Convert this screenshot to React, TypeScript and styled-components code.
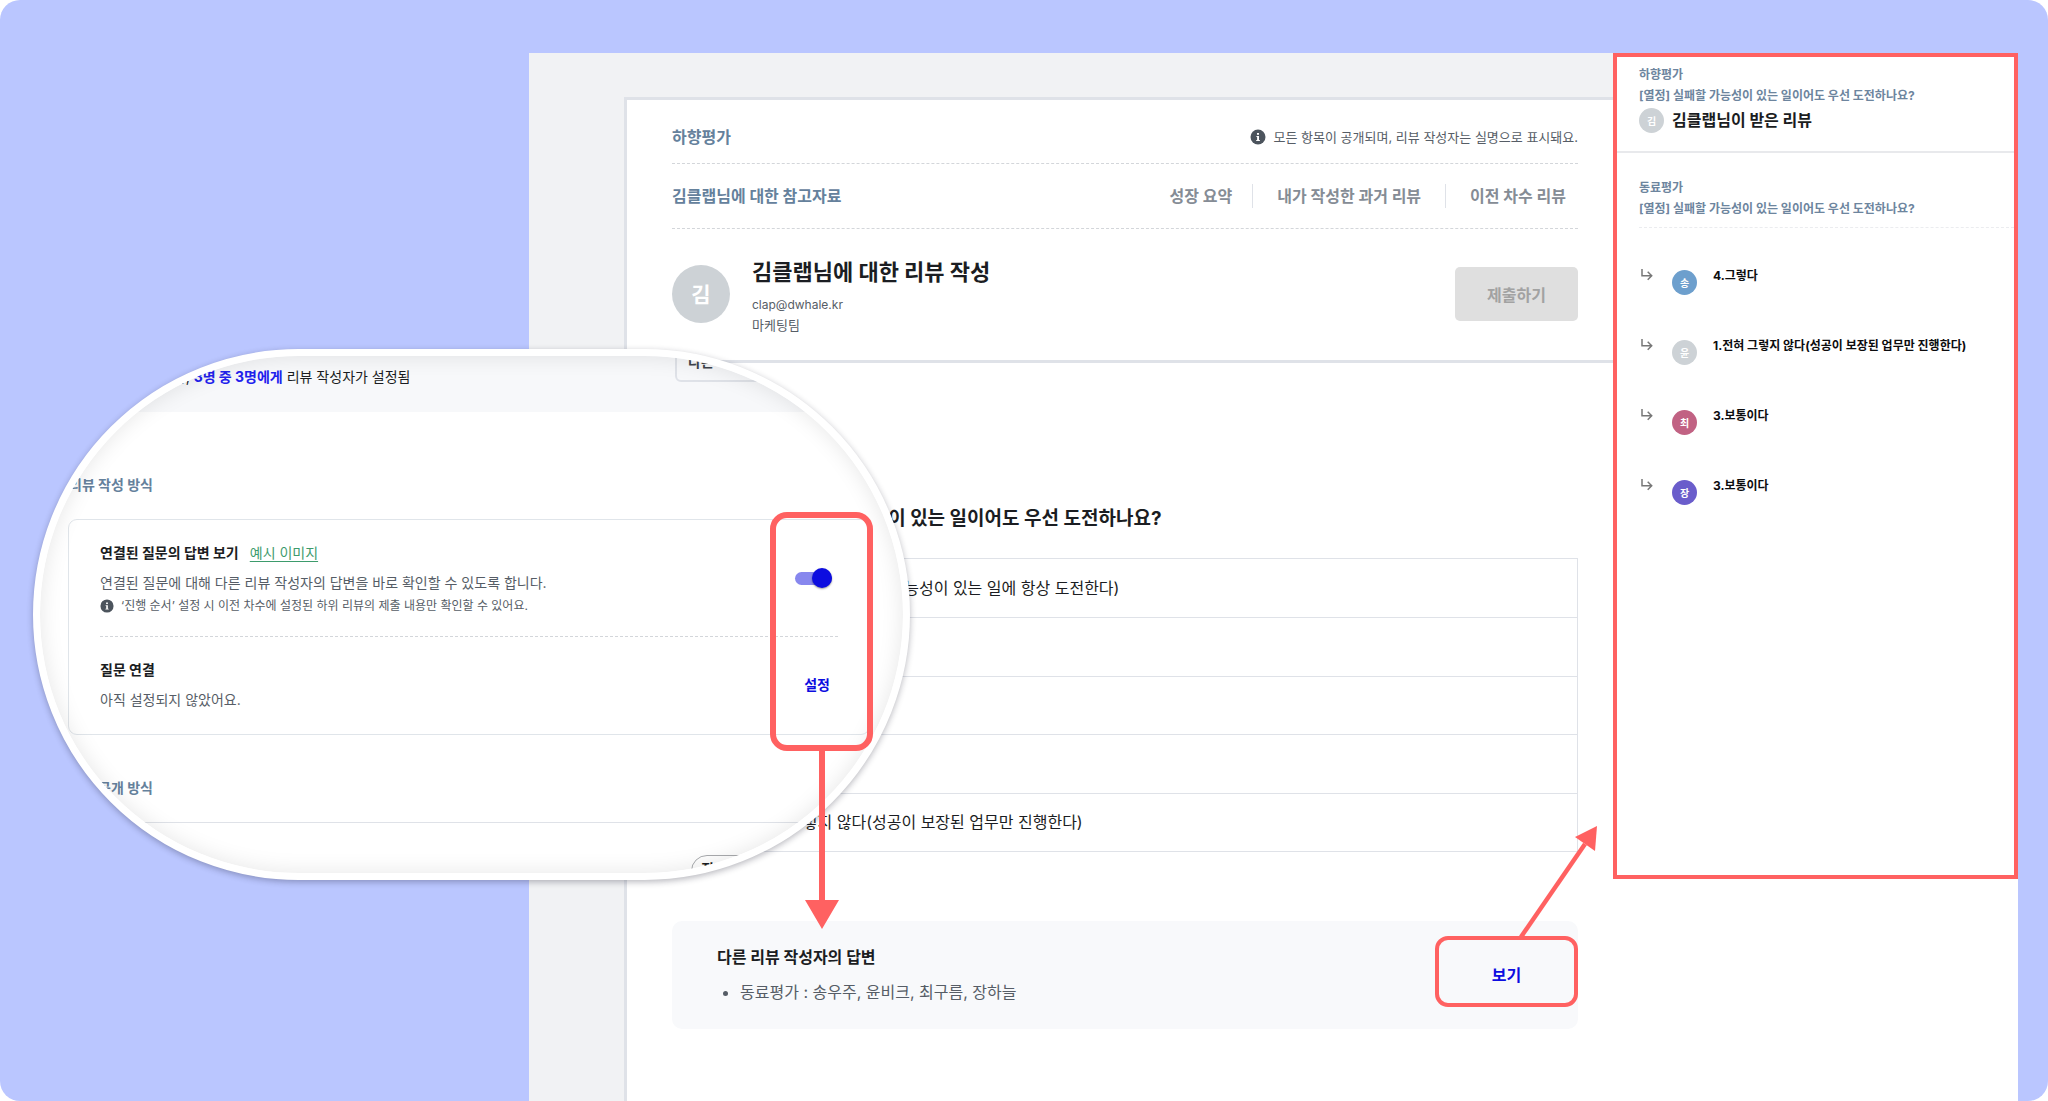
import React from "react";
import styled, { createGlobalStyle } from "styled-components";

const c = {
  red: "#ff6161",
  blue: "#0d0de0",
  slate: "#65819c",
  ink: "#1b1d22",
  gray: "#565d66",
  line: "#dfe2e8",
  soft: "#f7f8fa",
};

const GlobalStyle = createGlobalStyle`
  *, *::before, *::after { box-sizing: border-box; }
  body { margin: 0; background: #fff; }
  body, button, input { font-family: Inter, "Noto Sans CJK KR", sans-serif; }
  h1, h2, h3, p, ul, ol, fieldset { margin: 0; padding: 0; border: 0; }
  button { border: 0; padding: 0; background: none; cursor: pointer; }
`;

const Canvas = styled.div`
  position: relative;
  display: flex;
  min-height: 100vh;
  padding: 53px 30px 0 529px;
  border-radius: 20px;
  overflow: hidden;
  background: #bac6ff;
`;

const Desk = styled.main`
  flex: 1;
  display: flex;
  padding: 44px 0 0 95px;
  background: #f1f2f4;
`;

const Sheet = styled.div`
  flex: 1;
  border-left: 3px solid ${c.line};
  border-top: 3px solid ${c.line};
  background: #fff;
`;

const SheetHeader = styled.header`
  height: 263px;
  padding: 0 35px 0 45px;
  border-bottom: 3px solid ${c.line};
`;

const HeaderRow = styled.div<{ $h: number }>`
  display: flex;
  align-items: center;
  justify-content: space-between;
  height: ${(p) => p.$h}px;
  padding-top: ${(p) => (p.$h === 64 ? 10 : 0)}px;
  border-bottom: 1px dashed #d3d6da;
`;

const SectionTitle = styled.h2<{ $size?: number }>`
  font-size: ${(p) => p.$size || 16}px;
  line-height: 20px;
  font-weight: 700;
  color: ${c.slate};
`;

const Notice = styled.p<{ $size: number }>`
  display: flex;
  align-items: center;
  gap: 7px;
  font-size: ${(p) => p.$size}px;
  line-height: 20px;
  color: ${c.gray};
`;

const RefNav = styled.nav`
  display: flex;
  align-items: center;
  padding-right: 12px;
`;

const RefLink = styled.a`
  padding: 2px 24px;
  font-size: 16px;
  line-height: 20px;
  font-weight: 700;
  color: #858c95;
  text-decoration: none;
  & + & { border-left: 1px solid ${c.line}; }
  &:first-child { padding-right: 20px; }
  &:last-child { padding-right: 0; }
`;

const Person = styled.div`
  display: flex;
  align-items: center;
  gap: 22px;
  height: 130px;
`;

const PersonInfo = styled.div`
  flex: 1;
  display: flex;
  flex-direction: column;
  padding-top: 6px;
`;

const PersonTitle = styled.h1`
  margin-bottom: 8px;
  font-size: 22px;
  line-height: 28px;
  font-weight: 700;
  color: ${c.ink};
`;

const PersonMeta = styled.p<{ $size: number }>`
  font-size: ${(p) => p.$size}px;
  line-height: 21px;
  color: ${c.gray};
`;

const Avatar = styled.span<{ $size: number; $color?: string }>`
  flex: none;
  display: flex;
  align-items: center;
  justify-content: center;
  width: ${(p) => p.$size}px;
  height: ${(p) => p.$size}px;
  border-radius: 50%;
  background: ${(p) => p.$color || "#cdd2d6"};
  color: #fff;
  font-size: ${(p) => (p.$size > 40 ? 21 : 10)}px;
  line-height: 1;
  font-weight: 700;
`;

const SubmitButton = styled.button`
  width: 123px;
  height: 54px;
  border-radius: 5px;
  background: #dfdfdf;
  color: #a2a2a2;
  font-size: 16px;
  font-weight: 700;
`;

const Body = styled.section`
  padding: 142px 35px 72px 45px;
`;

const Question = styled.legend`
  padding: 0 0 0 53px;
  margin-bottom: 25px;
  font-size: 19px;
  line-height: 28px;
  font-weight: 700;
  color: ${c.ink};
`;

const Options = styled.div`
  display: grid;
  grid-auto-rows: 1fr;
  height: 294px;
  border: 1px solid ${c.line};
`;

const Option = styled.label`
  display: flex;
  align-items: center;
  gap: 20px;
  padding: 0 0 2px 37px;
  font-size: 16px;
  color: ${c.ink};
  & + & { border-top: 1px solid ${c.line}; }
  input { width: 13px; height: 13px; margin: 0; }
`;

const Answers = styled.section`
  position: relative;
  display: flex;
  align-items: center;
  justify-content: space-between;
  margin-top: 69px;
  padding: 24px 0 24px 45px;
  border-radius: 10px;
  background: #f8f9fb;
`;

const AnswersTitle = styled.h3`
  margin-bottom: 10px;
  font-size: 16px;
  line-height: 25px;
  color: ${c.ink};
`;

const AnswersList = styled.ul`
  padding-left: 23px;
  font-size: 16px;
  line-height: 25px;
  color: ${c.gray};
`;

const TextButton = styled.button<{ $size: number; $w?: number }>`
  width: ${(p) => (p.$w ? p.$w + "px" : "auto")};
  font-size: ${(p) => p.$size}px;
  line-height: 24px;
  font-weight: 700;
  color: ${c.blue};
`;

const ViewMarker = styled.span`
  position: absolute;
  top: 15px;
  right: 0;
  width: 143px;
  height: 71px;
  border: 4px solid ${c.red};
  border-radius: 13px;
  pointer-events: none;
`;

const SideColumn = styled.div`
  flex: 0 0 405px;
  background: #fff;
`;

const Panel = styled.aside`
  min-height: 826px;
  border: 4px solid ${c.red};
`;

const PanelHeader = styled.header`
  padding: 7px 22px 18px;
  border-bottom: 2px solid #e8e9ec;
`;

const PanelLabel = styled.p`
  font-size: 12px;
  line-height: 21px;
  font-weight: 700;
  color: #6d859e;
`;

const PanelPerson = styled.div`
  display: flex;
  align-items: center;
  gap: 8px;
  margin-top: 2px;
  h2 { font-size: 16px; line-height: 25px; color: ${c.ink}; }
`;

const PanelGroup = styled.div`
  margin-left: 22px;
  padding: 24px 0 8px;
  border-bottom: 1px dashed #ebecef;
`;

const Replies = styled.ul`
  display: flex;
  flex-direction: column;
  gap: 45px;
  padding: 42px 0 0 24px;
  list-style: none;
`;

const Reply = styled.li`
  display: flex;
  align-items: flex-start;
  height: 25px;
  font-size: 12px;
  line-height: 12px;
  font-weight: 700;
  color: #0c0c0e;
  svg { margin: -2px 19px 0 0; }
  p { margin-left: 16px; }
`;

const Lens = styled.section`
  position: absolute;
  left: 33px;
  top: 349px;
  width: 877px;
  height: 531px;
  border: 7px solid #fff;
  border-radius: 266px;
  overflow: hidden;
  background: #fff;
  box-shadow: 0 2px 6px rgba(20, 20, 40, 0.3);
  &::after {
    content: "";
    position: absolute;
    inset: 0;
    border-radius: 259px;
    box-shadow: inset 0 0 22px rgba(0, 0, 0, 0.1);
    pointer-events: none;
  }
`;

const LensTop = styled.div`
  display: flex;
  justify-content: space-between;
  height: 56px;
  padding: 0 60px 0 107px;
  background: ${c.soft};
`;

const Status = styled.p`
  padding-top: 11px;
  font-size: 14px;
  line-height: 20px;
  color: ${c.ink};
  b { color: #2222ee; }
`;

const Filter = styled.button`
  width: 168px;
  height: 37px;
  margin-top: -11px;
  padding: 0 0 5px 11px;
  border: 2px solid ${c.line};
  border-radius: 6px;
  text-align: left;
  font-size: 14px;
  font-weight: 700;
  color: #40454d;
`;

const LensHeading = styled.div<{ $top: number; $gap: number }>`
  padding: ${(p) => p.$top}px 29px ${(p) => p.$gap}px;
`;

const Settings = styled.div`
  margin: 0 33px 0 28px;
  padding: 20px 31px 21px;
  border: 1px solid #e0e5ea;
  border-radius: 9px;
`;

const Setting = styled.div`
  display: flex;
  align-items: center;
  justify-content: space-between;
  & + & {
    margin-top: 20px;
    padding-top: 20px;
    border-top: 1px dashed #d3d6da;
  }
`;

const SettingTitle = styled.div`
  display: flex;
  gap: 11px;
  font-size: 14px;
  line-height: 25px;
  font-weight: 700;
  color: ${c.ink};
  a { font-weight: 400; color: #3d9b6c; text-underline-offset: 3px; }
`;

const SettingText = styled.p`
  padding-top: 6px;
  margin-bottom: 1px;
  font-size: 14px;
  line-height: 24px;
  color: ${c.gray};
`;

const Actions = styled.div<{ $pad: number }>`
  display: flex;
  padding-right: ${(p) => p.$pad}px;
`;

const Toggle = styled.input`
  appearance: none;
  display: flex;
  align-items: center;
  justify-content: flex-end;
  width: 37px;
  height: 13px;
  margin: 0;
  border-radius: 7px;
  background: #8787ee;
  &::before {
    content: "";
    width: 20px;
    height: 20px;
    flex: none;
    border-radius: 50%;
    background: ${c.blue};
    box-shadow: 0 1px 2px rgba(0, 0, 0, 0.4);
  }
`;

const LensFooter = styled.div`
  border-top: 1px solid ${c.line};
  padding: 32px 0 0 651px;
`;

const Chip = styled.button`
  width: 90px;
  height: 32px;
  padding: 0 0 5px 9px;
  border: 1px solid #a9abae;
  border-radius: 16px;
  text-align: left;
  font-size: 14px;
  line-height: 24px;
  font-weight: 700;
  color: ${c.ink};
`;

const LensMarker = styled.span`
  position: absolute;
  left: 770px;
  top: 512px;
  width: 103px;
  height: 239px;
  border: 6px solid ${c.red};
  border-radius: 17px;
  pointer-events: none;
`;

const Arrow = styled.svg<{ $x: number; $y: number }>`
  position: absolute;
  left: ${(p) => p.$x}px;
  top: ${(p) => p.$y}px;
  pointer-events: none;
`;

const InfoIcon = ({ size }: { size: number }) => (
  <svg width={size} height={size} viewBox="0 0 16 16" aria-hidden="true">
    <circle cx="8" cy="8" r="7.5" fill="#4c545d" />
    <rect x="7" y="4" width="2" height="1.8" fill="#fff" />
    <path d="M6.4 7H9v4h.9v1H6.2v-1h.9V8h-.7z" fill="#fff" />
  </svg>
);

const ReplyIcon = () => (
  <svg width="12" height="14" viewBox="0 0 12 14" fill="none" stroke="#777" strokeWidth="1.5" aria-hidden="true">
    <path d="M1 1v6.8h9.4M6.7 3.8l4 4-4 4" />
  </svg>
);

const options = [
  "5.매우 그렇다(실패할 가능성이 있는 일에 항상 도전한다)",
  "4.그렇다",
  "3.보통이다",
  "2.그렇지 않다",
  "1.전혀 그렇지 않다(성공이 보장된 업무만 진행한다)",
];

const replies = [
  { name: "송", color: "#6d9fcd", text: "4.그렇다" },
  { name: "윤", color: "#cdd2d6", text: "1.전혀 그렇지 않다(성공이 보장된 업무만 진행한다)" },
  { name: "최", color: "#c16283", text: "3.보통이다" },
  { name: "장", color: "#6a5dcb", text: "3.보통이다" },
];

const question = "[열정] 실패할 가능성이 있는 일이어도 우선 도전하나요?";

export default function App() {
  return (
    <>
      <GlobalStyle />
      <Canvas>
        <Desk>
          <Sheet>
            <SheetHeader>
              <HeaderRow $h={64}>
                <SectionTitle>하향평가</SectionTitle>
                <Notice $size={13}>
                  <InfoIcon size={16} />
                  모든 항목이 공개되며, 리뷰 작성자는 실명으로 표시돼요.
                </Notice>
              </HeaderRow>
              <HeaderRow $h={65}>
                <SectionTitle>김클랩님에 대한 참고자료</SectionTitle>
                <RefNav>
                  <RefLink href="#growth">성장 요약</RefLink>
                  <RefLink href="#past">내가 작성한 과거 리뷰</RefLink>
                  <RefLink href="#previous">이전 차수 리뷰</RefLink>
                </RefNav>
              </HeaderRow>
              <Person>
                <Avatar $size={58}>김</Avatar>
                <PersonInfo>
                  <PersonTitle>김클랩님에 대한 리뷰 작성</PersonTitle>
                  <PersonMeta $size={12}>clap@dwhale.kr</PersonMeta>
                  <PersonMeta $size={13}>마케팅팀</PersonMeta>
                </PersonInfo>
                <SubmitButton disabled>제출하기</SubmitButton>
              </Person>
            </SheetHeader>
            <Body>
              <fieldset>
                <Question>{question}</Question>
                <Options>
                  {options.map((o) => (
                    <Option key={o}>
                      <input type="radio" name="answer" />
                      {o}
                    </Option>
                  ))}
                </Options>
              </fieldset>
              <Answers>
                <div>
                  <AnswersTitle>다른 리뷰 작성자의 답변</AnswersTitle>
                  <AnswersList>
                    <li>동료평가 : 송우주, 윤비크, 최구름, 장하늘</li>
                  </AnswersList>
                </div>
                <TextButton $size={16} $w={143}>보기</TextButton>
                <ViewMarker />
              </Answers>
            </Body>
          </Sheet>
        </Desk>

        <SideColumn>
          <Panel>
            <PanelHeader>
              <PanelLabel>하향평가</PanelLabel>
              <PanelLabel>{question}</PanelLabel>
              <PanelPerson>
                <Avatar $size={25}>김</Avatar>
                <h2>김클랩님이 받은 리뷰</h2>
              </PanelPerson>
            </PanelHeader>
            <PanelGroup>
              <PanelLabel>동료평가</PanelLabel>
              <PanelLabel>{question}</PanelLabel>
            </PanelGroup>
            <Replies>
              {replies.map((r) => (
                <Reply key={r.name}>
                  <ReplyIcon />
                  <Avatar $size={25} $color={r.color}>{r.name}</Avatar>
                  <p>{r.text}</p>
                </Reply>
              ))}
            </Replies>
          </Panel>
        </SideColumn>

        <Lens>
          <LensTop>
            <Status>
              대상자, <b>3명 중 3명에게</b> 리뷰 작성자가 설정됨
            </Status>
            <Filter>다른 리뷰 보기</Filter>
          </LensTop>
          <LensHeading $top={63} $gap={24}>
            <SectionTitle $size={14}>리뷰 작성 방식</SectionTitle>
          </LensHeading>
          <Settings>
            <Setting>
              <div>
                <SettingTitle>
                  <label htmlFor="linked">연결된 질문의 답변 보기</label>
                  <a href="#example">예시 이미지</a>
                </SettingTitle>
                <SettingText>
                  연결된 질문에 대해 다른 리뷰 작성자의 답변을 바로 확인할 수 있도록 합니다.
                </SettingText>
                <Notice $size={12}>
                  <InfoIcon size={14} />
                  ‘진행 순서’ 설정 시 이전 차수에 설정된 하위 리뷰의 제출 내용만 확인할 수 있어요.
                </Notice>
              </div>
              <Actions $pad={6}>
                <Toggle id="linked" type="checkbox" role="switch" defaultChecked />
              </Actions>
            </Setting>
            <Setting>
              <div>
                <SettingTitle>질문 연결</SettingTitle>
                <SettingText>아직 설정되지 않았어요.</SettingText>
              </div>
              <Actions $pad={8}>
                <TextButton $size={14}>설정</TextButton>
              </Actions>
            </Setting>
          </Settings>
          <LensHeading $top={43} $gap={24}>
            <SectionTitle $size={14}>결과 공개 방식</SectionTitle>
          </LensHeading>
          <LensFooter>
            <Chip>직접 설정</Chip>
          </LensFooter>
        </Lens>

        <LensMarker />
        <Arrow $x={805} $y={750} width="34" height="180" viewBox="0 0 34 180">
          <path d="M14 0h6v150h14L17 179 0 150h14z" fill={c.red} />
        </Arrow>
        <Arrow $x={1515} $y={824} width="86" height="116" viewBox="0 0 86 116">
          <path d="M6 113 70 20" stroke={c.red} strokeWidth="4.5" />
          <path d="M82 2 80 27 60 13z" fill={c.red} />
        </Arrow>
      </Canvas>
    </>
  );
}
